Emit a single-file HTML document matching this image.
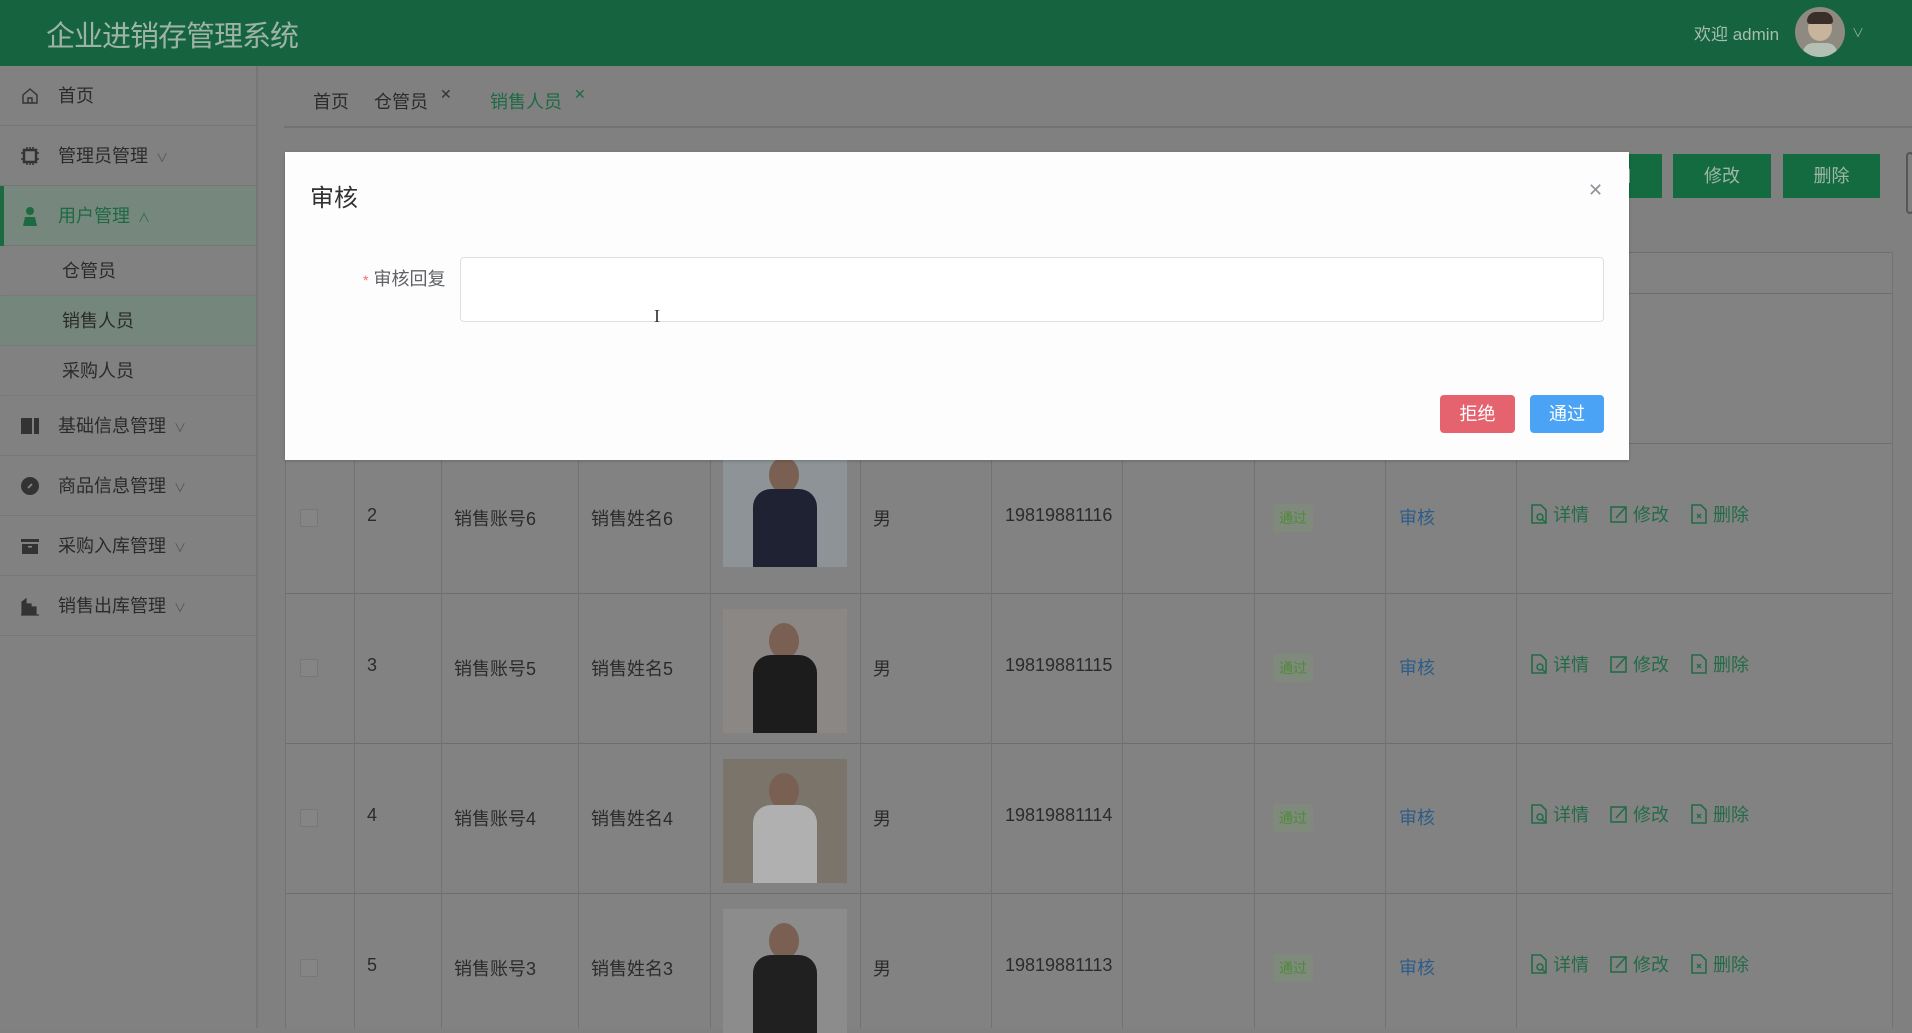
<!DOCTYPE html>
<html><head><meta charset="utf-8"><style>
*{margin:0;padding:0;box-sizing:border-box}
body{width:1912px;height:1028px;overflow:hidden;background:#808080;font-family:"Liberation Sans","Noto Sans CJK SC",sans-serif;color:#2b2b2b;position:relative}
.a{position:absolute}
.hdr{left:0;top:0;width:1912px;height:66px;background:#15633f}
.title{left:46px;top:13px;font-size:29px;color:#9db3a5;letter-spacing:-1px}
.side{left:0;top:66px;width:258px;height:962px;background:#818181;border-right:2px solid #767676}
.mi{left:0;width:256px;height:60px;border-bottom:1px solid #767676;font-size:18px;line-height:60px;padding-left:58px}
.mi .ic{position:absolute;left:20px;top:20px;width:20px;height:20px}
.mi .ch{font-size:12px;color:#555;margin-left:8px}
.sub{left:0;width:256px;height:50px;font-size:18px;line-height:50px;padding-left:62px;border-bottom:1px dotted #767676}
.tab{top:88px;font-size:18px}
.btn{height:44px;line-height:44px;text-align:center;color:#9fb7a8;background:#146b40;font-size:18px}
.tbl{left:285px;top:252px;width:1608px;height:776px;background:#828282}
.hl{position:absolute;left:0;width:1608px;height:1px;background:#6e6e6e}
.vl{position:absolute;top:0;width:1px;height:776px;background:#727272}
.cell{position:absolute;font-size:18px}
.ph{position:absolute;width:124px;height:124px;overflow:hidden}
.tag{position:absolute;width:40px;height:28px;background:#7f8a7d;color:#4f8a37;font-size:14px;line-height:28px;text-align:center;border-radius:3px}
.op{position:absolute;color:#236b47;font-size:18px;display:flex;align-items:center;gap:5px}
.op svg{width:18px;height:20px}
.dlg{left:285px;top:152px;width:1344px;height:308px;background:#fdfdfd;box-shadow:0 1px 3px rgba(0,0,0,.2)}
</style></head><body>
<div class="a hdr"></div>
<div class="a title">企业进销存管理系统</div>
<div class="a" style="left:1694px;top:20px;font-size:17px;color:#a7bdae">欢迎 admin</div>
<div class="a" style="left:1795px;top:7px;width:50px;height:50px;border-radius:50%;background:#8e8a80;overflow:hidden">
<div class="a" style="left:13px;top:8px;width:24px;height:26px;border-radius:50%;background:#c8b49c"></div>
<div class="a" style="left:12px;top:5px;width:26px;height:12px;border-radius:12px 12px 4px 4px;background:#3a2e28"></div>
<div class="a" style="left:8px;top:36px;width:34px;height:20px;border-radius:10px;background:#b4c0b4"></div></div>
<div class="a" style="left:1852px;top:24px;font-size:12px;color:#8faf9a">∨</div>

<div class="a side"></div>
<div class="a mi" style="top:66px">首页<svg class="ic" viewBox="0 0 20 20"><path d="M3 9L10 3L17 9V17H3Z M8 17V12H12V17" fill="none" stroke="#333" stroke-width="1.4"/></svg></div>
<div class="a mi" style="top:126px">管理员管理<span class="ch">∨</span><svg class="ic" viewBox="0 0 20 20"><rect x="4" y="4" width="12" height="12" fill="none" stroke="#333" stroke-width="2.5"/><path d="M7 1V4M10 1V4M13 1V4M7 16V19M10 16V19M13 16V19M1 7H4M1 13H4M16 7H19M16 13H19" stroke="#333" stroke-width="1.5"/></svg></div>
<div class="a mi" style="top:186px;background:#76877d;color:#1d6a41">用户管理<span class="ch" style="color:#2d6b48">∧</span><div class="a" style="left:0;top:0;width:4px;height:60px;background:#1a6b42"></div><svg class="ic" viewBox="0 0 20 20"><circle cx="10" cy="5" r="4" fill="#1d6a41"/><path d="M3 20L5 11H15L17 20Z" fill="#1d6a41"/></svg></div>
<div class="a sub" style="top:246px">仓管员</div>
<div class="a sub" style="top:296px;background:#75877c">销售人员</div>
<div class="a sub" style="top:346px">采购人员</div>
<div class="a mi" style="top:396px">基础信息管理<span class="ch">∨</span><svg class="ic" viewBox="0 0 20 20"><rect x="1" y="2" width="11" height="16" fill="#333"/><rect x="14" y="2" width="5" height="16" fill="#333"/></svg></div>
<div class="a mi" style="top:456px">商品信息管理<span class="ch">∨</span><svg class="ic" viewBox="0 0 20 20"><circle cx="10" cy="10" r="9" fill="#333"/><path d="M8 12L12 8" stroke="#888" stroke-width="1.8"/></svg></div>
<div class="a mi" style="top:516px">采购入库管理<span class="ch">∨</span><svg class="ic" viewBox="0 0 20 20"><rect x="1" y="3" width="18" height="3" fill="#333"/><rect x="2" y="8" width="16" height="10" fill="#333"/><rect x="8" y="10" width="4" height="1.5" fill="#888"/></svg></div>
<div class="a mi" style="top:576px">销售出库管理<span class="ch">∨</span><svg class="ic" viewBox="0 0 20 20"><path d="M1 19H19M2 19V6L6 3V19M7 19V8H11V19M12 19V11H16V19" fill="#333" stroke="#333" stroke-width="1.2"/></svg></div>

<div class="a tab" style="left:313px">首页</div>
<div class="a tab" style="left:374px">仓管员</div><div class="a" style="left:440px;top:86px;font-size:14px;color:#333">✕</div>
<div class="a tab" style="left:490px;color:#1d6a43">销售人员</div><div class="a" style="left:574px;top:86px;font-size:14px;color:#1d6a43">✕</div>
<div class="a" style="left:284px;top:126px;width:1628px;height:2px;background:#727272"></div>

<div class="a btn" style="left:1565px;top:154px;width:97px">添加</div>
<div class="a btn" style="left:1673px;top:154px;width:98px">修改</div>
<div class="a btn" style="left:1783px;top:154px;width:97px">删除</div>
<div class="a" style="left:1906px;top:152px;width:8px;height:62px;border:2px solid #555;border-radius:4px"></div>

<div class="a tbl">
<div class="hl" style="top:0"></div><div class="hl" style="top:41px"></div><div class="hl" style="top:191px"></div><div class="hl" style="top:341px"></div><div class="hl" style="top:491px"></div><div class="hl" style="top:641px"></div>
<div class="vl" style="left:0"></div><div class="vl" style="left:69px"></div><div class="vl" style="left:156px"></div><div class="vl" style="left:293px"></div><div class="vl" style="left:425px"></div><div class="vl" style="left:575px"></div><div class="vl" style="left:706px"></div><div class="vl" style="left:837px"></div><div class="vl" style="left:969px"></div><div class="vl" style="left:1100px"></div><div class="vl" style="left:1231px"></div><div class="vl" style="left:1607px"></div>
</div>

<div id="rows"></div>
<script>
var d=[[2,6,'#1e2233','#8d9396'],[3,5,'#1c1c1c','#8a8784'],[4,4,'#b0b0b0','#7a746a'],[5,3,'#202020','#8c8c8c']];
var ic1='<svg viewBox="0 0 18 20"><path d="M2 1H11L16 6V19H2Z" fill="none" stroke="#236b47" stroke-width="1.6"/><circle cx="10" cy="13" r="3" fill="none" stroke="#236b47" stroke-width="1.5"/><path d="M12 15L15 18" stroke="#236b47" stroke-width="1.5"/></svg>';
var ic2='<svg viewBox="0 0 18 20"><rect x="1" y="3" width="15" height="15" fill="none" stroke="#236b47" stroke-width="1.6"/><path d="M6 14L15 4" stroke="#236b47" stroke-width="1.6"/></svg>';
var ic3='<svg viewBox="0 0 18 20"><path d="M2 1H11L16 6V19H2Z" fill="none" stroke="#236b47" stroke-width="1.6"/><path d="M7 10L11 14M11 10L7 14" stroke="#236b47" stroke-width="1.3"/></svg>';
var h='';
d.forEach(function(r,i){var y=443+i*150,c=y+75;
h+='<div class="a" style="left:300px;top:'+(c-9)+'px;width:18px;height:18px;border:1px solid #777;border-radius:2px;background:#858585"></div>';
h+='<div class="cell a" style="left:367px;top:'+(c-13)+'px">'+r[0]+'</div>';
h+='<div class="cell a" style="left:454px;top:'+(c-13)+'px">销售账号'+r[1]+'</div>';
h+='<div class="cell a" style="left:591px;top:'+(c-13)+'px">销售姓名'+r[1]+'</div>';
h+='<div class="ph a" style="left:723px;top:'+(y+(i==0?0:16))+'px;background:'+r[3]+'"><div class="a" style="left:46px;top:14px;width:30px;height:36px;border-radius:50%;background:#7a6052"></div><div class="a" style="left:30px;top:46px;width:64px;height:80px;border-radius:18px 18px 0 0;background:'+r[2]+'"></div></div>';
h+='<div class="cell a" style="left:873px;top:'+(c-13)+'px">男</div>';
h+='<div class="cell a" style="left:1005px;top:'+(c-13)+'px">1981988111'+(7-i-1)+'</div>';
h+='<div class="tag a" style="left:1273px;top:'+(c-14)+'px">通过</div>';
h+='<div class="cell a" style="left:1399px;top:'+(c-14)+'px;color:#2d5c88">审核</div>';
h+='<div class="op a" style="left:1530px;top:'+(c-17)+'px">'+ic1+'详情</div><div class="op a" style="left:1610px;top:'+(c-17)+'px">'+ic2+'修改</div><div class="op a" style="left:1690px;top:'+(c-17)+'px">'+ic3+'删除</div>';
});
document.getElementById('rows').innerHTML=h;
</script>

<div class="a dlg">
<div class="a" style="left:25px;top:26px;font-size:24px;color:#303133">审核</div>
<div class="a" style="left:1303px;top:28px;font-size:18px;color:#909399">✕</div>
<div class="a" style="left:78px;top:113px;font-size:18px;color:#606266"><span style="color:#f56c6c;font-size:14px">*</span> 审核回复</div>
<div class="a" style="left:175px;top:105px;width:1144px;height:65px;border:1px solid #dcdfe6;border-radius:4px;background:#fff"></div>
<div class="a" style="left:369px;top:154px;font-size:18px;color:#333;font-family:'Liberation Serif',serif">I</div>
<div class="a" style="left:1155px;top:243px;width:75px;height:38px;background:#e5636f;border-radius:4px;color:#fff;font-size:18px;line-height:38px;text-align:center">拒绝</div>
<div class="a" style="left:1245px;top:243px;width:74px;height:38px;background:#4aa3f4;border-radius:4px;color:#fff;font-size:18px;line-height:38px;text-align:center">通过</div>
</div>
</body></html>
